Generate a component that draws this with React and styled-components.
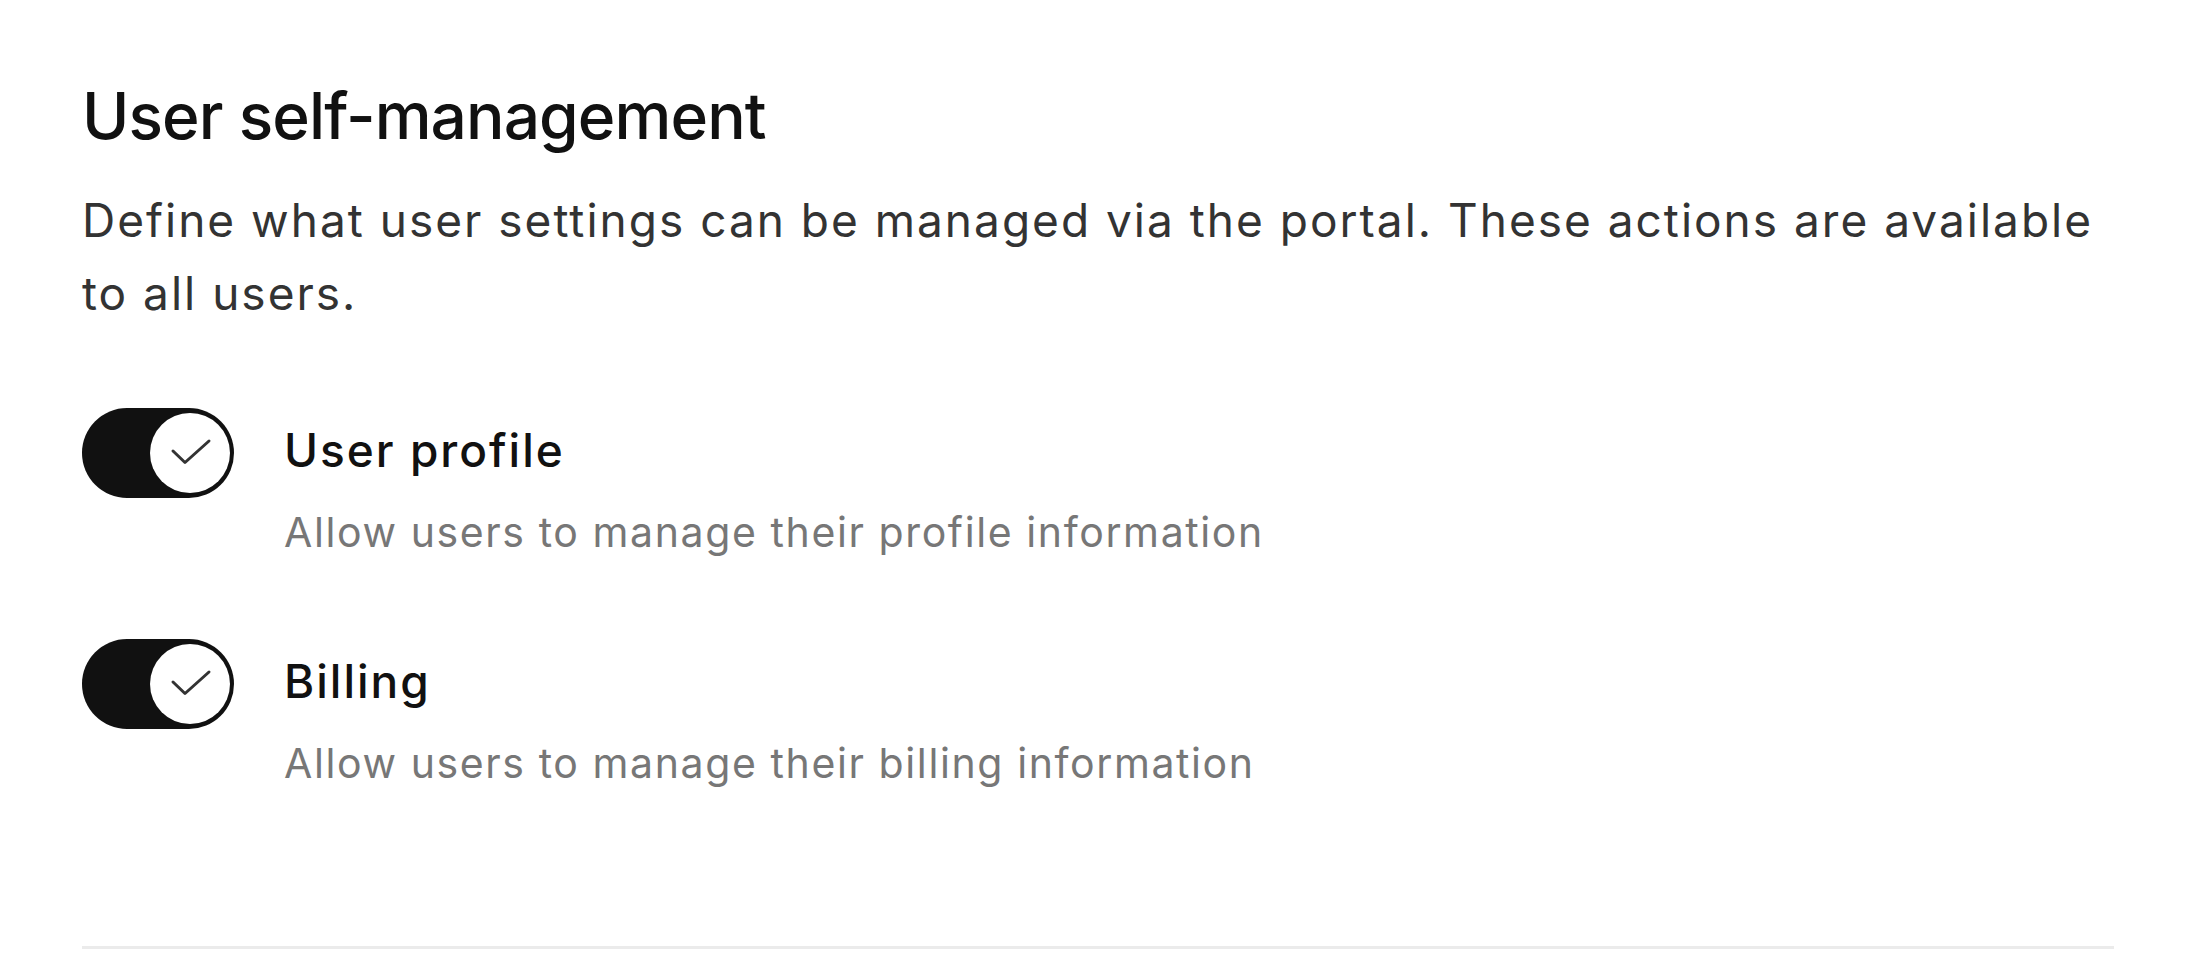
import {useState} from 'react';
import styled, {createGlobalStyle} from 'styled-components';

const GlobalStyle = createGlobalStyle`
  body {
    margin: 0;
    background: #fff;
    font-family: Inter, "Noto Sans", sans-serif;
    -webkit-font-smoothing: antialiased;
  }
`;

const Page = styled.div`
  padding: 78px 86px 0 82px;
`;

const Section = styled.section`
  display: flex;
  flex-direction: column;
`;

const Title = styled.h2`
  margin: 0;
  font-size: 64px;
  line-height: 1.2;
  font-weight: 500;
  color: #111;
  letter-spacing: -0.9px;
`;

const Description = styled.p`
  margin: 29px 0 0;
  font-size: 46px;
  line-height: 1.6;
  font-weight: 400;
  color: #333;
  letter-spacing: 2px;
`;

const OptionList = styled.div`
  display: flex;
  flex-direction: column;
  gap: 78px;
  margin-top: 77px;
`;

const OptionRow = styled.div`
  display: flex;
  align-items: flex-start;
  gap: 50px;
`;

const Track = styled.button`
  position: relative;
  flex: none;
  width: 152px;
  height: 90px;
  padding: 0;
  border: none;
  border-radius: 45px;
  background: ${({checked}) => checked ? '#111' : '#d4d4d4'};
  cursor: pointer;
  transition: background-color 0.2s ease-in-out;
`;

const Thumb = styled.span`
  position: absolute;
  top: 5px;
  left: ${({checked}) => checked ? '68px' : '5px'};
  width: 80px;
  height: 80px;
  border-radius: 50%;
  background: #fff;
  display: flex;
  align-items: center;
  justify-content: center;
  transition: left 0.2s ease-in-out;
`;

const OptionText = styled.div`
  display: flex;
  flex-direction: column;
  padding-top: 10px;
`;

const OptionLabel = styled.span`
  font-size: 46px;
  line-height: 64px;
  font-weight: 500;
  color: #111;
  letter-spacing: 2px;
`;

const OptionHint = styled.span`
  margin-top: 22px;
  font-size: 41px;
  line-height: 57px;
  font-weight: 400;
  color: #777;
  letter-spacing: 1.6px;
`;

const Divider = styled.hr`
  margin: 154px 0 0;
  border: none;
  height: 3px;
  background: #ebebeb;
`;

function CheckMark() {
    return (
        <svg width="80" height="80" viewBox="0 0 80 80" fill="none">
            <path d="M23 38 L35 49.5 L59 28" stroke="#333" strokeWidth="3"
                  strokeLinecap="round" strokeLinejoin="round"/>
        </svg>
    );
}

function Toggle({checked, onChange}) {
    return (
        <Track role="switch" aria-checked={checked} checked={checked} onClick={onChange}>
            <Thumb checked={checked}>{checked && <CheckMark/>}</Thumb>
        </Track>
    );
}

const options = [
    {id: 'profile', label: 'User profile', hint: 'Allow users to manage their profile information'},
    {id: 'billing', label: 'Billing', hint: 'Allow users to manage their billing information'},
];

export default function App() {
    const [enabled, setEnabled] = useState({profile: true, billing: true});

    const toggle = (id) => {
        setEnabled({...enabled, [id]: !enabled[id]});
    }

    return (
        <Page>
            <GlobalStyle/>
            <Section>
                <Title>User self-management</Title>
                <Description>
                    Define what user settings can be managed via the portal. These actions are available
                    to all users.
                </Description>
                <OptionList>
                    {options.map(o => (
                        <OptionRow key={o.id}>
                            <Toggle checked={enabled[o.id]} onChange={() => toggle(o.id)}/>
                            <OptionText>
                                <OptionLabel>{o.label}</OptionLabel>
                                <OptionHint>{o.hint}</OptionHint>
                            </OptionText>
                        </OptionRow>
                    ))}
                </OptionList>
                <Divider/>
            </Section>
        </Page>
    );
}
